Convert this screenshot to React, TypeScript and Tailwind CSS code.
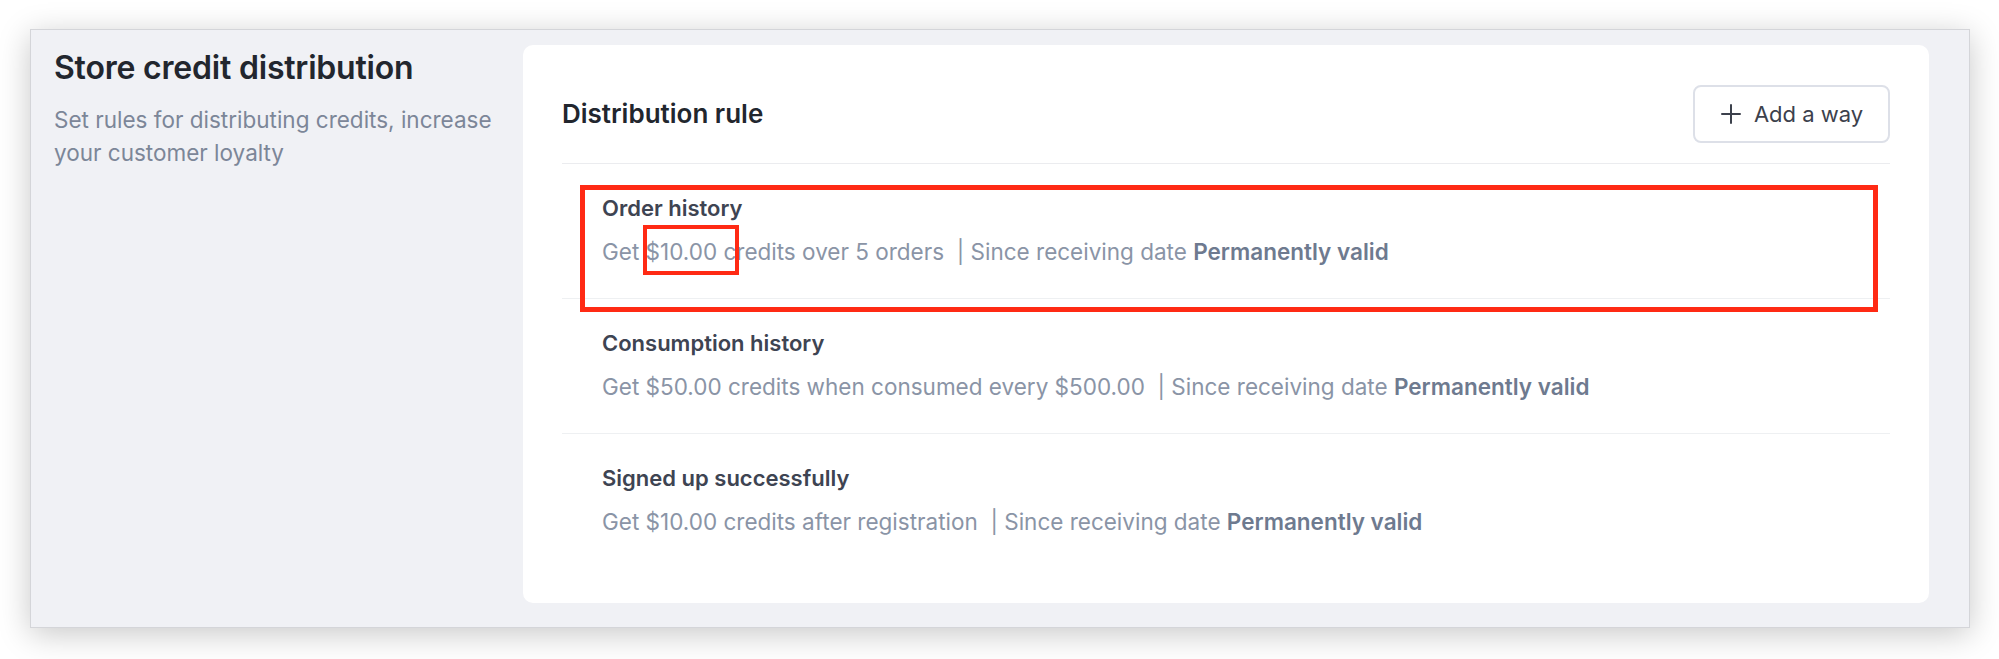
import React from "react";

const rows = [
  {
    title: "Order history",
    pre: "Get ",
    amount: "$10.00",
    post: " credits over 5 orders",
    highlight: true,
  },
  {
    title: "Consumption history",
    pre: "Get ",
    amount: "$50.00",
    post: " credits when consumed every $500.00",
    highlight: false,
  },
  {
    title: "Signed up successfully",
    pre: "Get ",
    amount: "$10.00",
    post: " credits after registration",
    highlight: false,
  },
];

export default function App() {
  return (
    <div
      className="w-[1999px] h-[659px] bg-white pt-[29px] pl-[30px] overflow-hidden"
      style={{ fontFamily: "Inter, 'Noto Sans', sans-serif" }}
    >
      <div className="w-[1940px] h-[599px] bg-[#f0f1f5] border border-[#d4d5d9] shadow-[0_6px_30px_rgba(0,0,0,0.22)] flex pt-[15px] pr-[40px] pb-[24px]">
        <div className="w-[492px] shrink-0 pl-[23px] pt-[3px]">
          <h1 className="text-[32px] leading-[40px] font-semibold text-[#22262e] tracking-[-0.2px]">
            Store credit distribution
          </h1>
          <p className="mt-[15px] text-[22.5px] leading-[33px] text-[#7c8698] w-[460px]">
            Set rules for distributing credits, increase your customer loyalty
          </p>
        </div>
        <div className="flex-1 bg-white rounded-[10px] px-[39px] pt-[40px] pb-[37px]">
          <div className="flex items-center justify-between pb-[20px] border-b border-[#ebecef]">
            <h2 className="text-[26px] leading-[32px] font-semibold text-[#22262e]">
              Distribution rule
            </h2>
            <button className="h-[58px] w-[197px] rounded-[8px] border-2 border-[#dde0e8] bg-white flex items-center justify-center gap-[12px] text-[22px] text-[#3c414c]">
              <svg width="22" height="22" viewBox="0 0 22 22" fill="none">
                <path d="M11 2v18M2 11h18" stroke="#3c414c" strokeWidth="2" strokeLinecap="round" />
              </svg>
              Add a way
            </button>
          </div>
          {rows.map((r, i) => (
            <div
              key={i}
              className={`relative pl-[40px] pt-[29px] pb-[31px] ${i < rows.length - 1 ? "border-b border-[#eef0f2]" : ""}`}
            >
              <div className="text-[22px] leading-[30px] font-semibold text-[#3e4452]">
                {r.title}
              </div>
              <div className="mt-[14px] text-[22.5px] leading-[30px] text-[#8a94a6] whitespace-pre">
                {r.pre}
                <span className="relative inline-block">
                  {r.amount}
                  {r.highlight && (
                    <span className="absolute left-[-3px] right-[-22px] top-[-12px] bottom-[-8px] border-[4px] border-[#ff2a14]" />
                  )}
                </span>
                {r.post}
                {"  | Since receiving date "}
                <span className="font-semibold text-[#6e7a8f]">Permanently valid</span>
              </div>
              {r.highlight && (
                <div className="absolute left-[18px] right-[12px] top-[21px] bottom-[-14px] border-[5px] border-[#ff2a14] pointer-events-none" />
              )}
            </div>
          ))}
        </div>
      </div>
    </div>
  );
}
